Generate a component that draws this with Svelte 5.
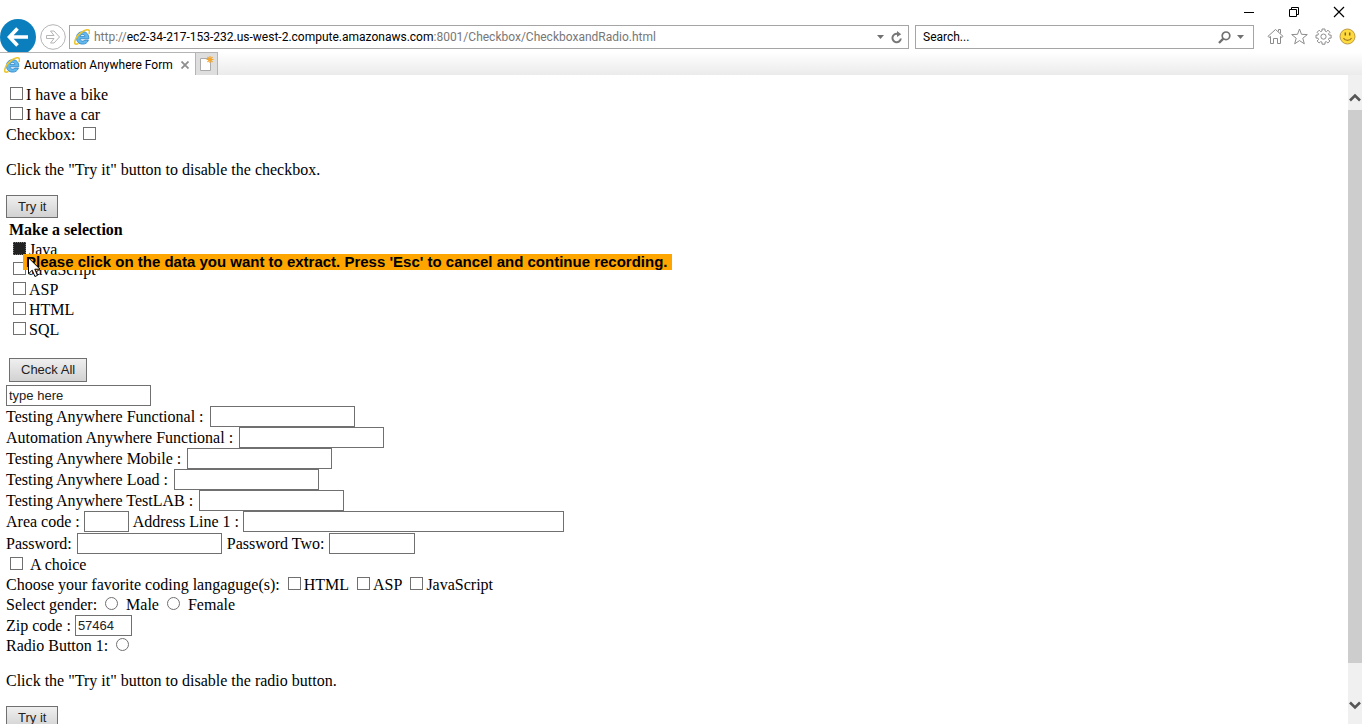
<script>
  let languages = $state([
    { name: 'Java', checked: true },
    { name: 'JavaScript', checked: false },
    { name: 'ASP', checked: false },
    { name: 'HTML', checked: false },
    { name: 'SQL', checked: false }
  ]);
  const testing = ['Testing Anywhere Functional :', 'Automation Anywhere Functional :', 'Testing Anywhere Mobile :', 'Testing Anywhere Load :', 'Testing Anywhere TestLAB :'];
  const favorites = ['HTML', 'ASP', 'JavaScript'];
  let bikeDisabled = $state(false);
  let radioDisabled = $state(false);

  function checkAll() {
    for (const l of languages) l.checked = true;
  }
</script>

{#snippet ie()}
  <svg class="ie" viewBox="0 0 16 16" width="16" height="16" aria-hidden="true">
    <path d="M14.800 9.800H6c.2 1.500 1.200 2.300 2.700 2.300 1 0 1.700-.3 2.200-1h3.500c-.8 2.600-2.900 4-5.700 4-3.700 0-6.300-2.500-6.300-6.200s2.600-6.200 6.300-6.200c3.900 0 6.300 2.700 6.100 7.100zM6.100 7.300h4.800c-.2-1.200-1-1.900-2.300-1.900s-2.200.7-2.500 1.900z" fill="#62b9ee" stroke="#2a7fc2" stroke-width=".8" />
    <path d="M4.500 14.300C1.800 15.900.3 15.400.8 12.600 1.300 9.800 3.500 6.400 6.800 3.800 10.500.900 14.300-.1 15.200 1.600c.5.900.3 2-.3 3.200" fill="none" stroke="#edc52d" stroke-width="1.600" />
  </svg>
{/snippet}

<div class="window">
  <header>
    <div class="titlebar">
      <button aria-label="Minimize"><svg width="12" height="12" viewBox="0 0 12 12"><path d="M1 6.500h10" stroke="#000" /></svg></button>
      <button aria-label="Restore"><svg width="12" height="12" viewBox="0 0 12 12"><path d="M1.500 3.500h7v7h-7zM3.500 3.500v-2h7v7h-2" fill="none" stroke="#000" /></svg></button>
      <button aria-label="Close"><svg width="12" height="12" viewBox="0 0 12 12"><path d="M1 1l10 10M11 1L1 11" stroke="#000" stroke-width="1.200" /></svg></button>
    </div>
    <nav class="toolbar">
      <button class="back" aria-label="Back">
        <svg width="36" height="36" viewBox="0 0 36 36"><circle cx="18" cy="18" r="18" fill="#0b7fbd" /><path d="M28 18H10M17.500 9.500L9.500 18l8 8.500" fill="none" stroke="#fff" stroke-width="3.600" /></svg>
      </button>
      <button class="forward" aria-label="Forward">
        <svg width="26" height="26" viewBox="0 0 26 26"><circle cx="13" cy="13" r="12.300" fill="#fff" stroke="#b4b4b4" /><path d="M6.500 11.500h7.500l-3.500-4.500h3.500l5.500 6-5.500 6h-3.500l3.500-4.500H6.500z" fill="#fff" stroke="#b4b4b4" /></svg>
      </button>
      <div class="address">
        {@render ie()}
        <span class="url">http://<b>ec2-34-217-153-232.us-west-2.compute.amazonaws.com</b>:8001/Checkbox/CheckboxandRadio.html</span>
        <button aria-label="Show address history"><svg width="8" height="4" viewBox="0 0 8 4"><path d="M0 0h7L3.500 4z" fill="#707070" /></svg></button>
        <button aria-label="Refresh"><svg width="12" height="13" viewBox="0 0 12 13"><path d="M9.800 7.500A4.200 4.200 0 1 1 6.500 2.900" fill="none" stroke="#777" stroke-width="2" /><path d="M6 0l4.200 3.200L6 6z" fill="#777" /></svg></button>
      </div>
      <div class="search">
        <input aria-label="Search" value="Search..." />
        <button aria-label="Search the web"><svg width="13" height="13" viewBox="0 0 13 13"><circle cx="8" cy="4.800" r="3.800" fill="none" stroke="#707070" stroke-width="1.700" /><path d="M5.300 7.600L1 12" stroke="#707070" stroke-width="2.300" /></svg></button>
        <button aria-label="Search options"><svg width="8" height="4" viewBox="0 0 8 4"><path d="M0 0h7L3.500 4z" fill="#707070" /></svg></button>
      </div>
      <div class="tools">
        <button aria-label="Home"><svg width="17" height="17" viewBox="0 0 17 17"><path d="M3.500 8.500v7h3v-5h4v5h3v-7l1.500 1 1-1.200L8.500 1.500 1 8.300l1 1.200zM11.500 3.500v-2h2v4" fill="#fff" stroke="#8c8c8c" /></svg></button>
        <button aria-label="Favorites"><svg width="17" height="17" viewBox="0 0 17 17"><path d="M8.500 1l2 5.300 5.800.3-4.500 3.600 1.500 5.600-4.800-3.200-4.800 3.200 1.500-5.600L.7 6.600l5.800-.3z" fill="#fff" stroke="#8c8c8c" /></svg></button>
        <button aria-label="Settings"><svg width="17" height="17" viewBox="0 0 17 17"><path d="M7 1h3v2l1.500.6L13 2.200 15 4.300l-1.500 1.500.6 1.300h2v3h-2l-.6 1.400 1.400 1.500-2.100 2-1.400-1.400-1.400.6v2H7v-2l-1.400-.6L4.200 15l-2.100-2 1.400-1.500-.6-1.400H1v-3h1.900l.6-1.300-1.400-1.500L4.200 2.200l1.400 1.400L7 3z" fill="#fff" stroke="#8c8c8c" /><circle cx="8.500" cy="8.600" r="2.600" fill="#fff" stroke="#8c8c8c" /></svg></button>
        <button aria-label="Send a smile"><svg width="17" height="17" viewBox="0 0 17 17"><circle cx="8.500" cy="8.500" r="7.500" fill="#ffda3d" stroke="#b99a4a" /><path d="M6.300 4.500v3M10.700 4.500v3" stroke="#7b632b" stroke-width="1.500" /><path d="M4.500 10c1.500 3.200 6.500 3.200 8 0" fill="none" stroke="#a17d25" stroke-width="1.200" /></svg></button>
      </div>
    </nav>
    <div class="tabs">
      <div class="tab">
        {@render ie()}
        <span>Automation Anywhere Form</span>
        <button aria-label="Close tab"><svg width="8" height="8" viewBox="0 0 8 8"><path d="M.5.5l7 7M7.500.5l-7 7" stroke="#8f8f8f" stroke-width="1.800" /></svg></button>
      </div>
      <button class="newtab" aria-label="New tab"><svg width="15" height="16" viewBox="0 0 15 16"><path d="M1.500 2.500h10v12h-10z" fill="#fff" stroke="#aaa" /><path d="M11 0v7M7.500 3.500h7M8.500 1l5 5M13.500 1l-5 5" stroke="#f3a52c" stroke-width="1.100" /></svg></button>
    </div>
  </header>

  <div class="viewport">
    <main>
      <div class="row lead"><input type="checkbox" id="bike" disabled={bikeDisabled} /><label for="bike">I have a bike</label></div>
      <div class="row lead"><input type="checkbox" id="car" disabled={bikeDisabled} /><label for="car">I have a car</label></div>
      <div class="row wide"><label for="solo">Checkbox:</label><input type="checkbox" id="solo" disabled={bikeDisabled} /></div>
      <p>Click the "Try it" button to disable the checkbox.</p>
      <button class="push" onclick={() => (bikeDisabled = true)}>Try it</button>

      <fieldset>
        <legend>Make a selection</legend>
        {#each languages as lang}
          <div class="row lead"><input type="checkbox" id="lang-{lang.name}" bind:checked={lang.checked} /><label for="lang-{lang.name}">{lang.name}</label></div>
        {/each}
        <button class="push all" onclick={checkAll}>Check All</button>
      </fieldset>

      <input class="text" aria-label="Text" value="type here" />
      {#each testing as name, i}
        <div class="field test"><label for="test-{i}">{name}</label><input class="text" id="test-{i}" /></div>
      {/each}
      <div class="field">
        <label for="area">Area code :</label><input class="text area" id="area" />
        <label for="addr">Address Line 1 :</label><input class="text addr" id="addr" />
      </div>
      <div class="field pass">
        <label for="pw1">Password:</label><input class="text" type="password" id="pw1" />
        <label for="pw2">Password Two:</label><input class="text short" type="password" id="pw2" />
      </div>
      <div class="row lead choice"><input type="checkbox" id="choice" /><label for="choice">A choice</label></div>
      <div class="row wide">
        <span>Choose your favorite coding langaguge(s):</span>
        {#each favorites as fav}
          <span class="option"><input type="checkbox" id="fav-{fav}" /><label for="fav-{fav}">{fav}</label></span>
        {/each}
      </div>
      <div class="row wide">
        <span>Select gender:</span>
        <input type="radio" name="gender" id="male" /><label for="male">Male</label>
        <input type="radio" name="gender" id="female" /><label for="female">Female</label>
      </div>
      <div class="field"><label for="zip">Zip code :</label><input class="text zip" id="zip" value="57464" /></div>
      <div class="row wide"><label for="radio1">Radio Button 1:</label><input type="radio" id="radio1" disabled={radioDisabled} /></div>
      <p>Click the "Try it" button to disable the radio button.</p>
      <button class="push" onclick={() => (radioDisabled = true)}>Try it</button>
    </main>
    <div class="scrollbar">
      <svg width="12" height="9" viewBox="0 0 12 9"><path d="M1 7.500L6 2.500l5 5" fill="none" stroke="#555" stroke-width="2.600" /></svg>
      <div class="thumb"></div>
      <svg width="12" height="9" viewBox="0 0 12 9"><path d="M1 1.500l5 5 5-5" fill="none" stroke="#555" stroke-width="2.600" /></svg>
    </div>
  </div>

  <div class="hint" role="status">Please click on the data you want to extract. Press 'Esc' to cancel and continue recording.</div>
  <svg class="cursor" width="13" height="21" viewBox="0 0 13 21" aria-hidden="true"><path d="M.5.800v16l3.700-3.600 2.700 6.300 2.600-1.100-2.700-6.200h5.200z" fill="#fff" stroke="#000" /></svg>
</div>

<style>
  :global(body) { margin: 0; background: #fff; }
  .window { position: relative; height: 100vh; display: flex; flex-direction: column; overflow: hidden; font-family: "Liberation Serif", "Times New Roman", serif; font-size: 16px; line-height: 20px; color: #000; }
  header { font-family: Roboto, "Noto Sans", sans-serif; font-size: 12px; flex: none; }
  header button { border: 0; padding: 0; background: none; display: flex; flex: none; }
  .titlebar { height: 19px; padding: 6px 17px 0 0; box-sizing: border-box; display: flex; justify-content: flex-end; gap: 33px; }
  .toolbar { height: 33px; display: flex; align-items: center; padding: 0 6px 0 0; }
  .back { align-self: flex-start; }
  .forward { margin: 2px 3px 0 4px; }
  .address, .search { height: 24px; box-sizing: border-box; border: 1px solid #a5a5a5; display: flex; align-items: center; background: #fff; margin-top: 3px; }
  .address { flex: 829 1 0; padding: 0 5px 0 4px; gap: 4px; min-width: 0; }
  .address button { margin-left: 2px; }
  .url { flex: 1; color: #777; white-space: nowrap; overflow: hidden; }
  .url b { font-weight: 400; color: #000; }
  .ie { flex: none; }
  .search { flex: 322 1 0; margin-left: 6px; padding: 0 8px 0 7px; gap: 6px; min-width: 0; }
  .search input { flex: 1; min-width: 0; border: 0; padding: 0; font: inherit; color: #000; outline: 0; }
  .tools { display: flex; gap: 7px; margin: 2px 0 0 13px; }
  .tabs { position: relative; height: 23px; display: flex; background: linear-gradient(#fff, #ebebeb); }
  .tab { display: flex; align-items: center; gap: 4px; padding: 1px 6px 0 4px; background: #fff; border-top: 1px solid #b4b4b4; }
  .tab button { margin-left: 4px; }
  .tabs .newtab { width: 23px; box-sizing: border-box; border: 1px solid #b4b4b4; border-bottom: 0; background: #dedede; align-items: center; justify-content: center; }
  .viewport { flex: 1; min-height: 0; display: flex; overflow: hidden; }
  main { flex: 1; padding: 10px 6px 0; min-width: 0; }
  .row { display: flex; align-items: center; height: 20px; gap: 3px; }
  .lead { padding-left: 4px; }
  .wide { gap: 8px; }
  .choice { gap: 7px; }
  .option { display: flex; align-items: center; gap: 3px; }
  p { margin: 15px 0; }
  input[type="checkbox"], input[type="radio"] { appearance: none; width: 13px; height: 13px; box-sizing: border-box; margin: 0 0 3px; border: 1px solid #707070; background: #fff; flex: none; }
  input[type="radio"] { border-radius: 50%; }
  input[type="checkbox"]:checked { background: #222; border: 1px dotted #777; }
  .push { display: block; height: 23px; box-sizing: border-box; padding: 0 11px; border: 1px solid #707070; background: linear-gradient(#efefef, #d2d2d2); font: 13px/20px "Liberation Sans", Arial, sans-serif; color: #222; }
  fieldset { border: 0; margin: 2px 0 3px; padding: 0 3px; min-width: 0; }
  legend { padding: 0; font-weight: 700; }
  .all { margin-top: 18px; height: 24px; }
  .text { display: block; width: 145px; height: 21px; box-sizing: border-box; border: 1px solid #707070; padding: 0 2px; margin: 0; background: #fff; color: #222; font: 13px/18px "Liberation Sans", Arial, sans-serif; }
  .field { display: flex; align-items: center; gap: 4px; height: 21px; }
  .test { gap: 6px; }
  .pass { height: 23px; gap: 5px; }
  .area { width: 45px; }
  .addr { width: 321px; }
  .short { width: 86px; }
  .zip { width: 57px; }
  .scrollbar { width: 14px; background: #f0f0f0; display: flex; flex-direction: column; align-items: center; padding: 18px 0 14px; box-sizing: border-box; gap: 8px; }
  .thumb { flex: 1; width: 100%; background: #cdcdcd; margin-bottom: 30px; }
  .scrollbar svg { flex: none; }
  .hint { position: absolute; left: 23px; top: 254px; padding: 0 4px 0 3px; background: #ffa500; font: 700 15px/16px "Liberation Sans", Arial, sans-serif; white-space: nowrap; }
  .cursor { position: absolute; left: 28px; top: 257px; }
</style>
